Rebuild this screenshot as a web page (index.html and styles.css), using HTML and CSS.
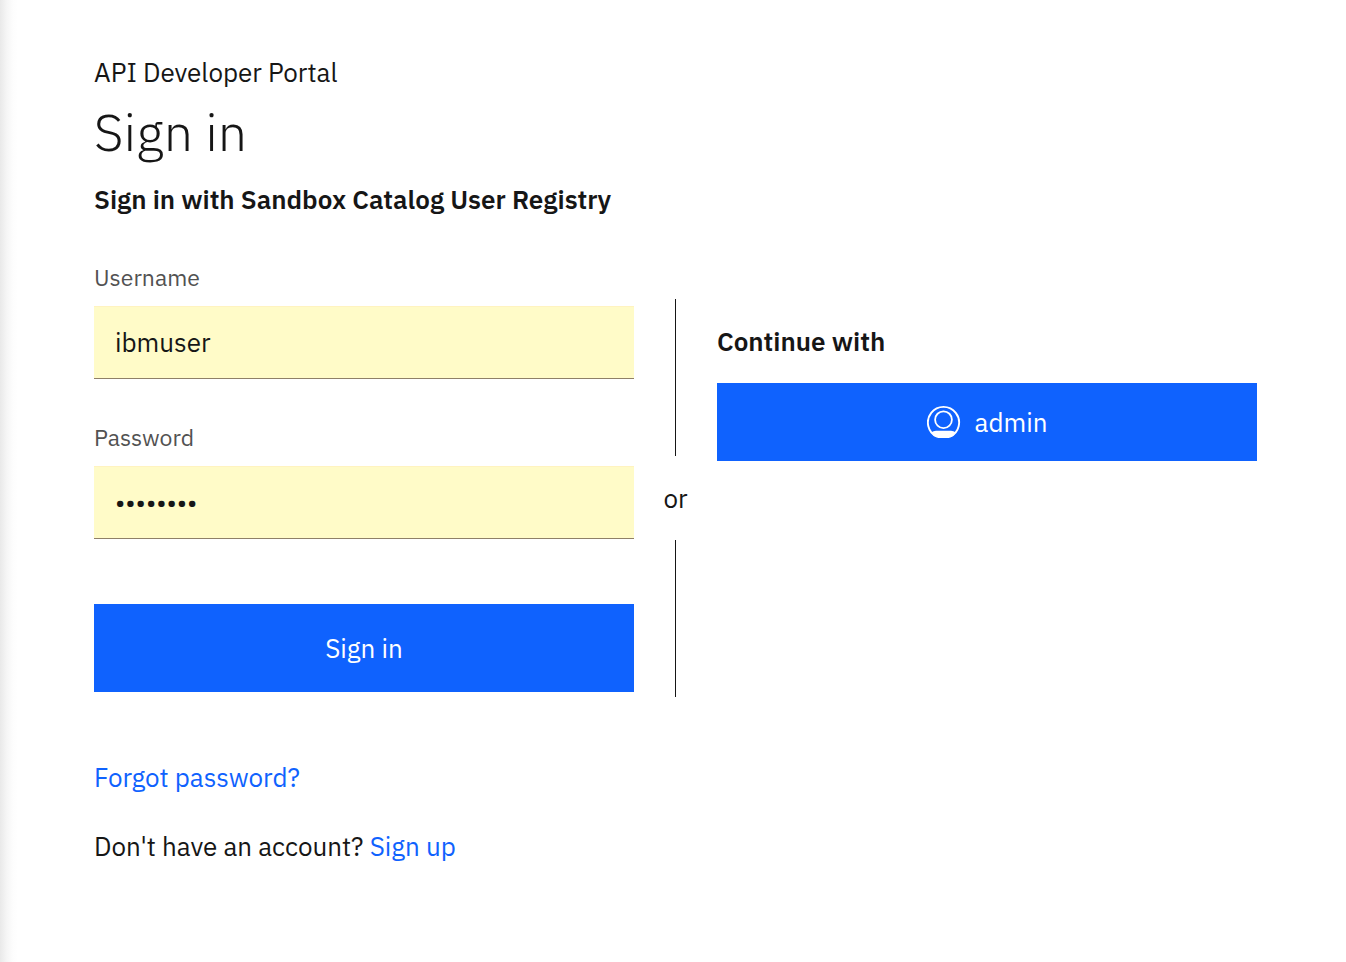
FILE: index.html
```html
<!DOCTYPE html>
<html lang="en">
<head>
<meta charset="utf-8">
<meta name="viewport" content="width=device-width, initial-scale=1">
<title>Sign in - API Developer Portal</title>
<link rel="stylesheet" href="styles.css">
</head>
<body>
<main class="page">
  <header class="intro">
    <p class="site-name">API Developer Portal</p>
    <h1 class="title">Sign in</h1>
    <h2 class="registry">Sign in with Sandbox Catalog User Registry</h2>
  </header>
  <div class="columns">
    <form class="login">
      <label class="label" for="username">Username</label>
      <input class="field" id="username" type="text" value="ibmuser">
      <label class="label" for="password">Password</label>
      <input class="field" id="password" type="password" value="password">
      <button class="button submit" type="submit">Sign in</button>
    </form>
    <div class="divider"><span class="or">or</span></div>
    <section class="alternatives">
      <h2 class="continue">Continue with</h2>
      <button class="button provider" type="button">
        <svg class="avatar" viewBox="0 0 34 34" aria-hidden="true">
          <path d="M10 31.7A15.6 15.6 0 1 1 23 31.700" fill="none" stroke="currentColor" stroke-width="1.9"/>
          <circle cx="16.5" cy="14.7" r="8.4" fill="none" stroke="currentColor" stroke-width="1.8"/>
          <path d="M4 27.500Q6.500 25.800 9 25.800H24Q26.500 25.800 29 27.500Q26.500 31.500 22 33H11Q6.500 31.500 4 27.500z" fill="currentColor"/>
        </svg>
        <span>admin</span>
      </button>
    </section>
  </div>
  <footer class="links">
    <p><a href="#forgot">Forgot password?</a></p>
    <p>Don't have an account? <a href="#signup">Sign up</a></p>
  </footer>
</main>
</body>
</html>
```
FILE: styles.css
```css
* { box-sizing: border-box; }
body {
  margin: 0;
  min-height: 100vh;
  background: linear-gradient(to right, #e9e9e9, #f6f6f6 7px, #fdfdfd 13px, #fff 18px);
  color: #161616;
  font: 26px/36px "IBM Plex Sans", "Open Sans", sans-serif;
}
p, h1, h2 { margin: 0; }
.page { padding: 54px 89px 48px 94px; }
.title { margin-top: 8px; font-size: 52px; line-height: 68px; font-weight: 300; }
.registry { margin-top: 15px; font-size: 26px; font-weight: 600; }
.columns { display: grid; grid-template-columns: 1fr 83px 1fr; margin-top: 44px; }
.login { display: flex; flex-direction: column; }
.label { margin-bottom: 13px; color: #525252; font-size: 23px; line-height: 32px; }
.field {
  width: 100%;
  height: 73px;
  margin-bottom: 42px;
  padding: 0 21px;
  border: 0;
  border-bottom: 1px solid #8f8068;
  border-radius: 0;
  background: #fffbc8;
  box-shadow: inset 0 1px #fff3c0;
  color: #161616;
  font: inherit;
}
.button { width: 100%; border: 0; background: #0f62fe; color: #fff; font: inherit; }
.submit { height: 88px; margin-top: 23px; }
.divider { display: flex; flex-direction: column; align-items: center; margin-top: 38px; height: 398px; }
.divider::before, .divider::after { content: ""; flex: 1; width: 1px; background: #161616; }
.or { padding: 24px 0; }
.alternatives { padding-top: 62px; }
.continue { font-size: 26px; font-weight: 600; }
.provider { display: flex; align-items: center; justify-content: center; gap: 14px; height: 78px; margin-top: 24px; }
.avatar { width: 34px; height: 34px; }
.links { display: grid; gap: 33px; margin-top: 62px; }
a { color: #0f62fe; text-decoration: none; }
```
